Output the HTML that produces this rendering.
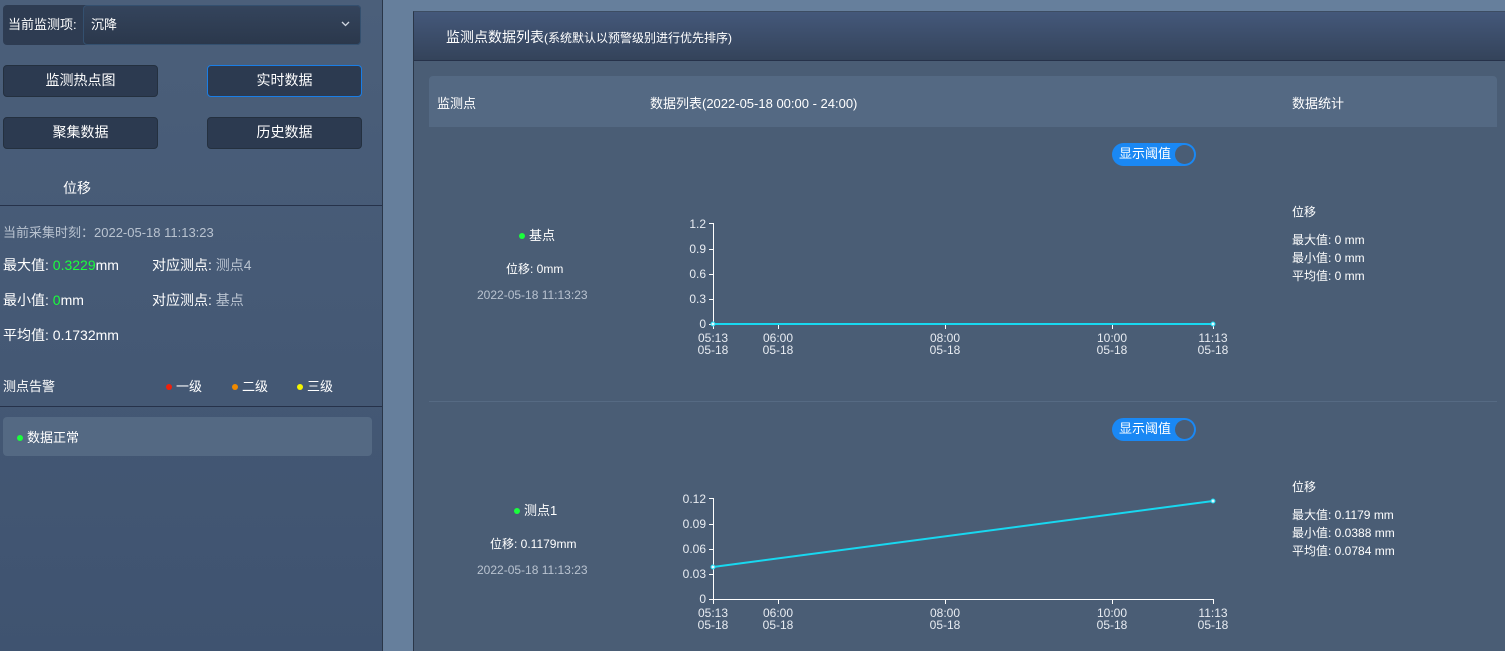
<!DOCTYPE html>
<html><head><meta charset="utf-8"><style>
*{margin:0;padding:0;box-sizing:border-box}
body{width:1505px;height:651px;overflow:hidden;background:#667f9c;font-family:"Liberation Sans","Noto Sans CJK SC",sans-serif;color:#fff;position:relative}
.a{position:absolute;white-space:nowrap}
#left{position:absolute;left:0;top:0;width:383px;height:651px;background:linear-gradient(#4b5f7a,#3f5370);border-right:1px solid #2a3648}
.btn{position:absolute;width:155px;height:32px;background:#2c3a50;border:1px solid #24303f;border-radius:4px;font-size:14px;text-align:center;line-height:28px}
.f13{font-size:13px}.f14{font-size:14px}.f12{font-size:12px}
.t{margin-top:-3px}
.dot{display:inline-block;width:6px;height:6px;border-radius:50%;margin-right:4px;vertical-align:middle;position:relative;top:-1px}
.g{color:#1aff3c}.gr{color:#b9c3d0}
.tog{position:absolute;width:84px;height:23px;border-radius:12px;background:#1a88f4;font-size:13px;line-height:21px;padding-left:7px}
.tog:after{content:"";position:absolute;right:2px;top:2px;width:19px;height:19px;border-radius:50%;background:#4a5d75}
</style></head><body>
<div id="left">
 <div class="a" style="left:3px;top:5px;width:358px;height:40px;background:#2e3c52;border-radius:4px"></div>
 <div class="a f13" style="left:8px;top:14px">当前监测项:</div>
 <div class="a" style="left:83px;top:5px;width:278px;height:40px;background:linear-gradient(#34445c,#2b384c);border:1px solid #34506f;border-radius:4px"></div>
 <div class="a f13" style="left:91px;top:14px">沉降</div>
 <svg class="a" style="left:341px;top:21px" width="9" height="6"><path d="M1 1 L4.5 4.5 L8 1" stroke="#d0d6e0" stroke-width="1.3" fill="none"/></svg>
 <div class="btn" style="left:3px;top:65px">监测热点图</div>
 <div class="btn" style="left:207px;top:65px;border-color:#1a7ee6">实时数据</div>
 <div class="btn" style="left:3px;top:117px">聚集数据</div>
 <div class="btn" style="left:207px;top:117px">历史数据</div>
 <div class="a f14" style="left:63px;top:178px">位移</div>
 <div class="a" style="left:0;top:205px;width:382px;height:1px;background:#26324a"></div>
 <div class="a f13 gr" style="left:3px;top:222px">当前采集时刻：2022-05-18 11:13:23</div>
 <div class="a f14" style="left:3px;top:255px">最大值: <span class="g">0.3229</span>mm</div>
 <div class="a f14" style="left:152px;top:255px">对应测点: <span class="gr">测点4</span></div>
 <div class="a f14" style="left:3px;top:290px">最小值: <span class="g">0</span>mm</div>
 <div class="a f14" style="left:152px;top:290px">对应测点: <span class="gr">基点</span></div>
 <div class="a f14" style="left:3px;top:325px">平均值: 0.1732mm</div>
 <div class="a f13" style="left:3px;top:376px">测点告警</div>
 <div class="a f13" style="left:166px;top:376px"><span class="dot" style="background:#f0200a"></span>一级</div>
 <div class="a f13" style="left:232px;top:376px"><span class="dot" style="background:#f08a00"></span>二级</div>
 <div class="a f13" style="left:297px;top:376px"><span class="dot" style="background:#f4f400"></span>三级</div>
 <div class="a" style="left:0;top:406px;width:382px;height:1px;background:#26324a"></div>
 <div class="a" style="left:3px;top:417px;width:369px;height:39px;background:#546983;border-radius:4px"></div>
 <div class="a f13" style="left:17px;top:427px"><span class="dot" style="background:#1aff3c"></span>数据正常</div>
</div>
<div class="a" style="left:413px;top:11px;width:1092px;height:640px;background:#4a5d75;border-left:1px solid #2a3648;border-top:1px solid #3d4d63"></div>
<div class="a" style="left:414px;top:12px;width:1091px;height:49px;background:linear-gradient(#44587a,#34435a);border-bottom:1px solid #26324a"></div>
<div class="a f14" style="left:446px;top:27px">监测点数据列表<span class="f12">(系统默认以预警级别进行优先排序)</span></div>
<div class="a" style="left:429px;top:76px;width:1068px;height:51px;background:#546983;border-radius:4px 4px 0 0"></div>
<div class="a f13" style="left:437px;top:93px">监测点</div>
<div class="a f13" style="left:650px;top:93px">数据列表(2022-05-18 00:00 - 24:00)</div>
<div class="a f13" style="left:1292px;top:93px">数据统计</div>
<div class="a" style="left:429px;top:401px;width:1068px;height:1px;background:#566a83"></div>

<div class="tog" style="left:1112px;top:143px">显示阈值</div>
<div class="tog" style="left:1112px;top:418px">显示阈值</div>

<div class="a f13" style="left:519px;top:225px"><span class="dot" style="background:#1aff3c"></span>基点</div>
<div class="a f12" style="left:506px;top:260px">位移: 0mm</div>
<div class="a f12 gr" style="left:477px;top:288px">2022-05-18 11:13:23</div>
<div class="a f13" style="left:514px;top:500px"><span class="dot" style="background:#1aff3c"></span>测点1</div>
<div class="a f12" style="left:490px;top:535px">位移: 0.1179mm</div>
<div class="a f12 gr" style="left:477px;top:563px">2022-05-18 11:13:23</div>

<div class="a f12" style="left:1292px;top:203px;line-height:18px">位移</div>
<div class="a f12" style="left:1292px;top:231px;line-height:18px">最大值: 0 mm<br>最小值: 0 mm<br>平均值: 0 mm</div>
<div class="a f12" style="left:1292px;top:478px;line-height:18px">位移</div>
<div class="a f12" style="left:1292px;top:506px;line-height:18px">最大值: 0.1179 mm<br>最小值: 0.0388 mm<br>平均值: 0.0784 mm</div>

<svg class="a" style="left:0;top:0" width="1505" height="651" font-family="Liberation Sans,sans-serif" font-size="12" fill="#e8ecf2">
<g stroke="#fff" stroke-width="1">
<line x1="713.5" y1="223" x2="713.5" y2="324"/>
<line x1="709" y1="223.5" x2="713" y2="223.5"/><line x1="709" y1="249.5" x2="713" y2="249.5"/><line x1="709" y1="274.5" x2="713" y2="274.5"/><line x1="709" y1="299.5" x2="713" y2="299.5"/><line x1="709" y1="324.5" x2="713" y2="324.5"/>
<line x1="713" y1="324.5" x2="1213" y2="324.5"/>
<line x1="713.5" y1="324" x2="713.5" y2="329"/><line x1="778.5" y1="324" x2="778.5" y2="329"/><line x1="945.5" y1="324" x2="945.5" y2="329"/><line x1="1112.5" y1="324" x2="1112.5" y2="329"/><line x1="1213.5" y1="324" x2="1213.5" y2="329"/>
<line x1="713.5" y1="498" x2="713.5" y2="599"/>
<line x1="709" y1="498.5" x2="713" y2="498.5"/><line x1="709" y1="524.5" x2="713" y2="524.5"/><line x1="709" y1="549.5" x2="713" y2="549.5"/><line x1="709" y1="574.5" x2="713" y2="574.5"/><line x1="709" y1="599.5" x2="713" y2="599.5"/>
<line x1="713" y1="599.5" x2="1213" y2="599.5"/>
<line x1="713.5" y1="599" x2="713.5" y2="604"/><line x1="778.5" y1="599" x2="778.5" y2="604"/><line x1="945.5" y1="599" x2="945.5" y2="604"/><line x1="1112.5" y1="599" x2="1112.5" y2="604"/><line x1="1213.5" y1="599" x2="1213.5" y2="604"/>
</g>
<line x1="713" y1="324" x2="1213" y2="324" stroke="#18d8f0" stroke-width="2"/>
<line x1="713" y1="567" x2="1213" y2="501" stroke="#18d8f0" stroke-width="2"/>
<g fill="#e0f8ff" stroke="#18d8f0"><circle cx="713" cy="324" r="2"/><circle cx="1213" cy="324" r="2"/><circle cx="713" cy="567" r="2"/><circle cx="1213" cy="501" r="2"/></g>
<g text-anchor="end">
<text x="706" y="228">1.2</text><text x="706" y="253">0.9</text><text x="706" y="278">0.6</text><text x="706" y="303">0.3</text><text x="706" y="328">0</text>
<text x="706" y="503">0.12</text><text x="706" y="528">0.09</text><text x="706" y="553">0.06</text><text x="706" y="578">0.03</text><text x="706" y="603">0</text>
</g>
<g text-anchor="middle">
<text x="713" y="342">05:13</text><text x="713" y="354">05-18</text>
<text x="778" y="342">06:00</text><text x="778" y="354">05-18</text>
<text x="945" y="342">08:00</text><text x="945" y="354">05-18</text>
<text x="1112" y="342">10:00</text><text x="1112" y="354">05-18</text>
<text x="1213" y="342">11:13</text><text x="1213" y="354">05-18</text>
<text x="713" y="617">05:13</text><text x="713" y="629">05-18</text>
<text x="778" y="617">06:00</text><text x="778" y="629">05-18</text>
<text x="945" y="617">08:00</text><text x="945" y="629">05-18</text>
<text x="1112" y="617">10:00</text><text x="1112" y="629">05-18</text>
<text x="1213" y="617">11:13</text><text x="1213" y="629">05-18</text>
</g>
</svg>
</body></html>
